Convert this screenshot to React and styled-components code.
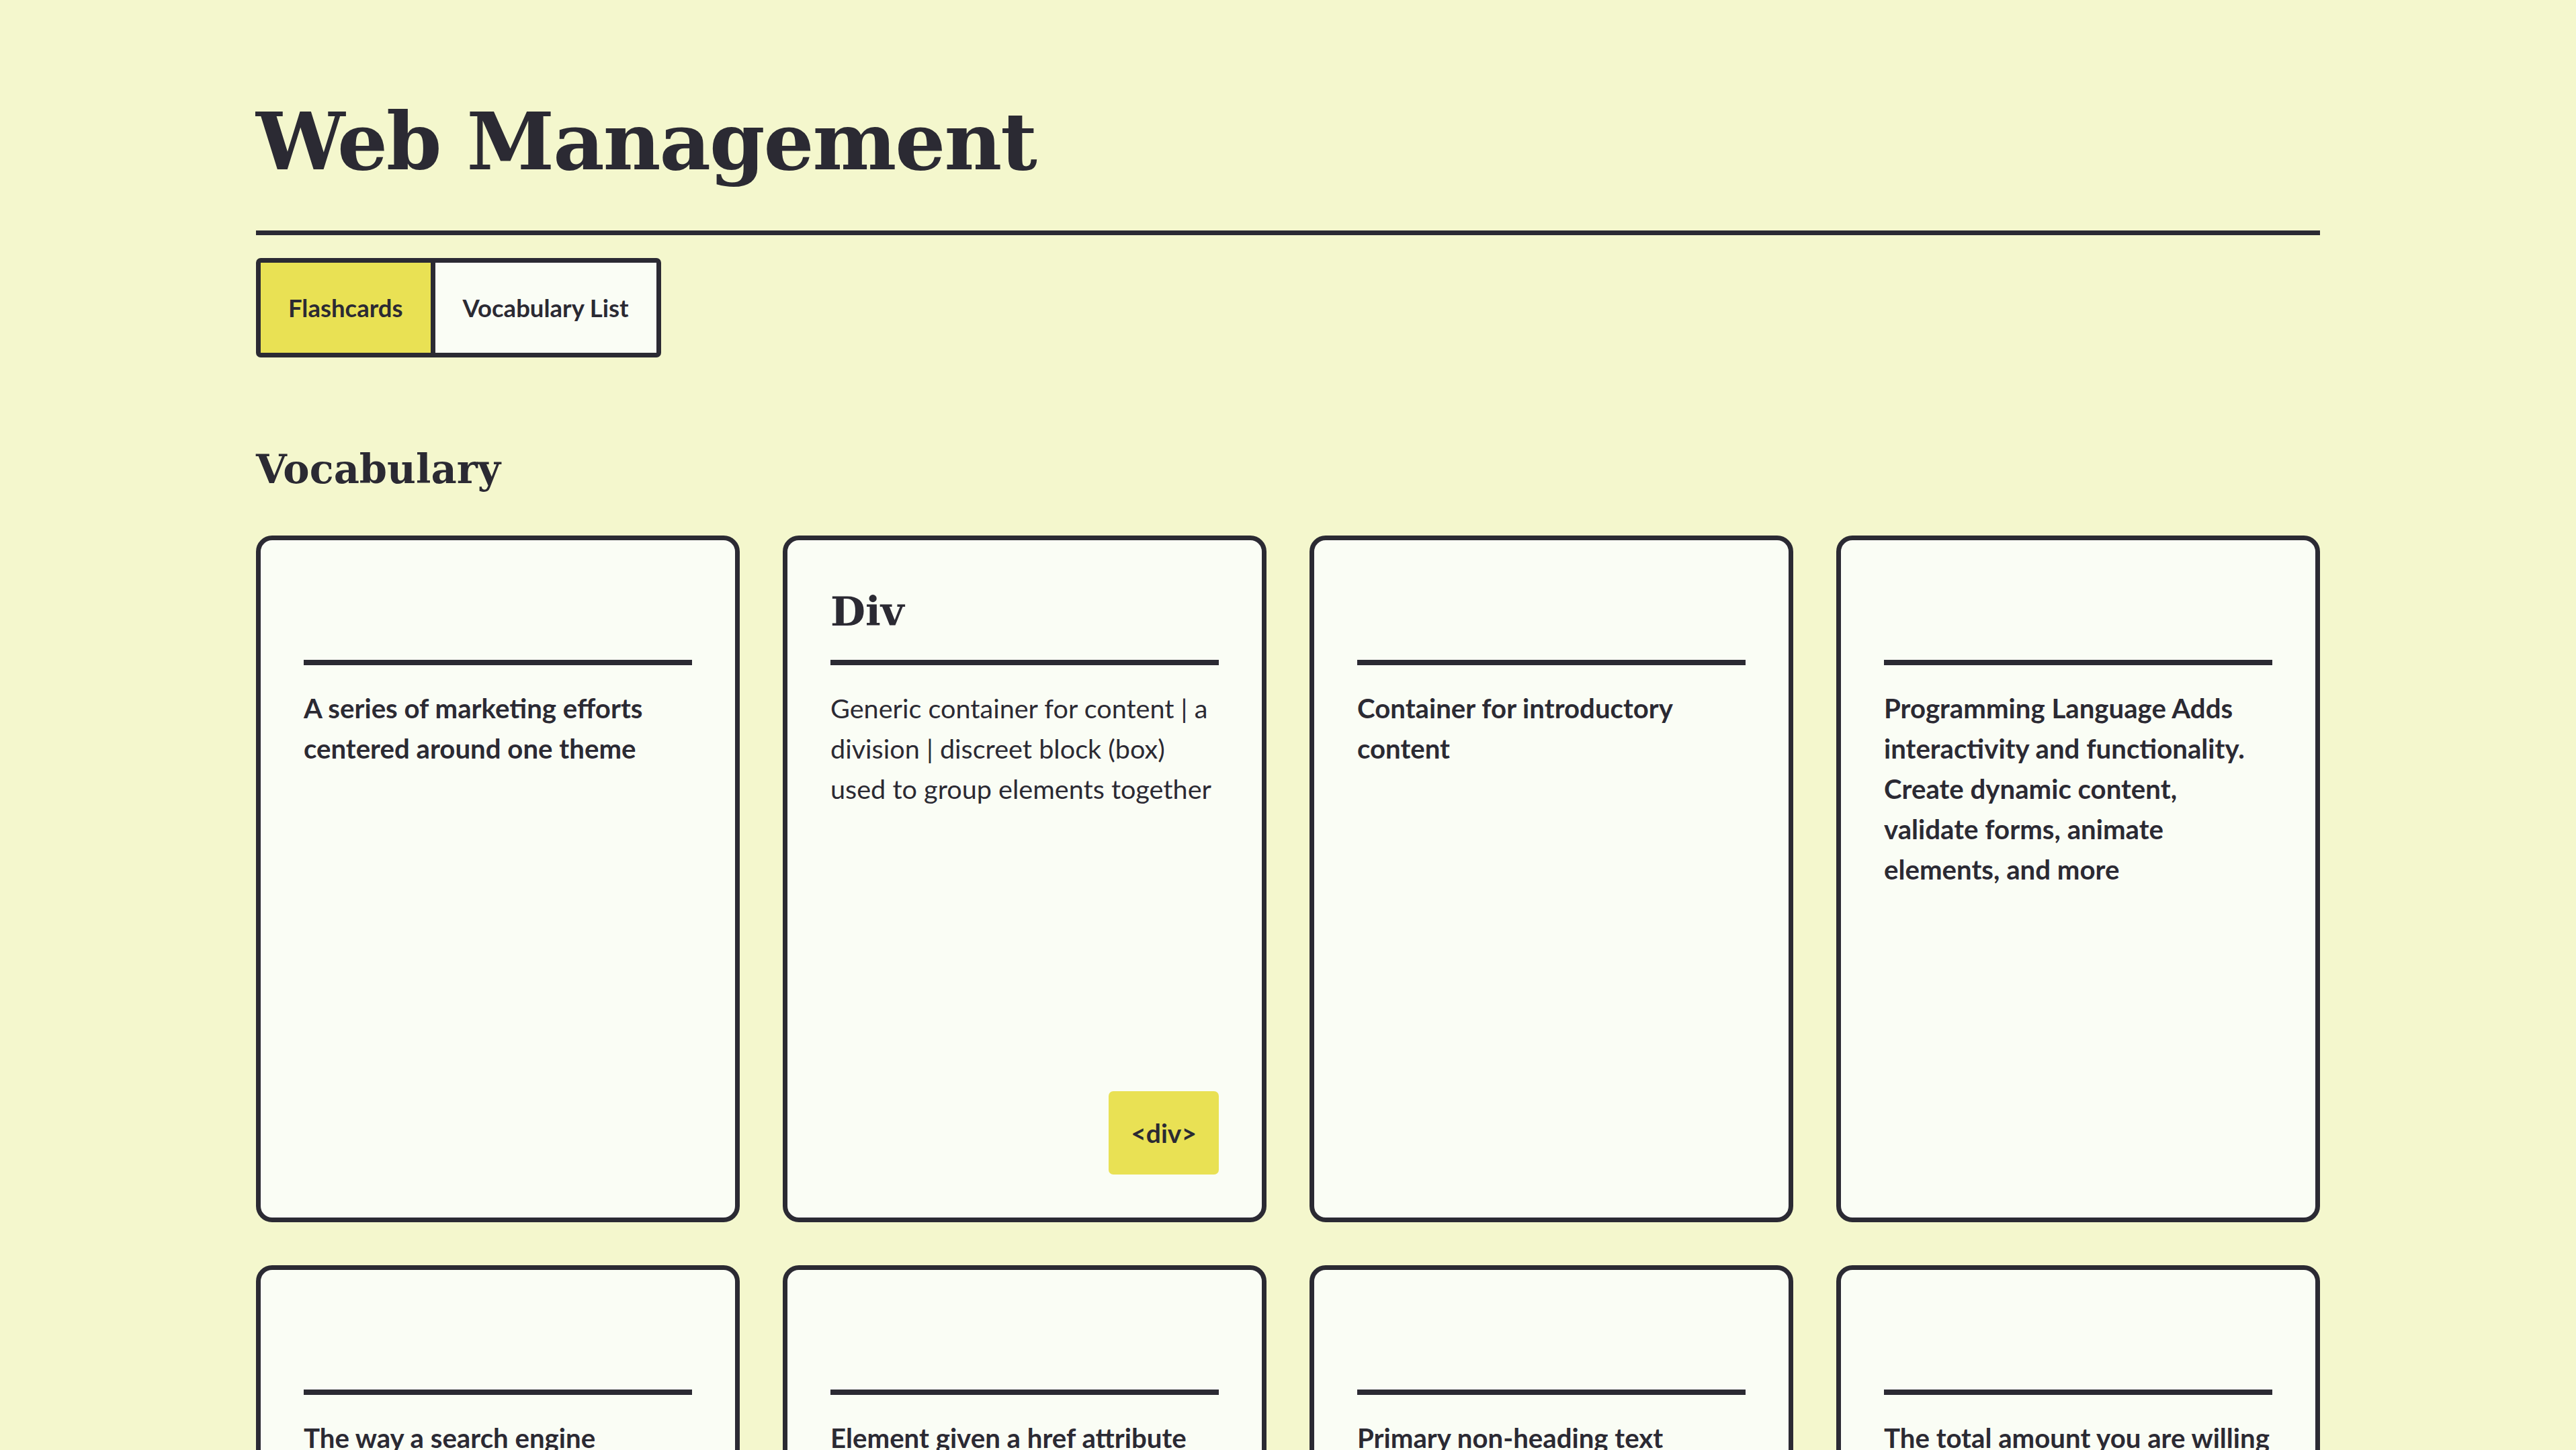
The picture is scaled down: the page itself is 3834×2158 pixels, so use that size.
import React from 'react';
import styled, { createGlobalStyle } from "styled-components";

const GlobalStyle = createGlobalStyle`
  html, body {
    margin: 0;
    padding: 0;
    background-color: #f4f7cd;
    color: #2b2a33;
    font-family: Lato, "Open Sans", sans-serif;
  }
`

const Page = styled.main`
  max-width: 3072px;
  margin: 0 auto;
  padding-top: 140px;
`

const Header = styled.header`
  border-bottom: 7px solid #2b2a33;
  padding-bottom: 61px;
`

const Title = styled.h1`
  margin: 0;
  font-family: "DejaVu Serif", "Liberation Serif", serif;
  font-weight: 700;
  font-size: 118px;
  line-height: 1.2;
  letter-spacing: -2px;
`

const Tabs = styled.div`
  display: inline-flex;
  margin-top: 34px;
  border: 7px solid #2b2a33;
  border-radius: 7px;
  overflow: hidden;
`

const Tab = styled.button`
  font-family: Lato, sans-serif;
  font-weight: 700;
  font-size: 36.5px;
  line-height: 44px;
  color: #2b2a33;
  padding: 45px 41px;
  border: none;
  border-left: ${props => props.first ? "none" : "7px solid #2b2a33"};
  background-color: ${props => props.active ? "#e9e154" : "#fafdf5"};
  cursor: pointer;
`

const SectionTitle = styled.h2`
  margin: 132px 0 0;
  font-family: "DejaVu Serif", "Liberation Serif", serif;
  font-weight: 700;
  font-size: 59px;
  line-height: 1.2;
`

const CardGrid = styled.div`
  display: grid;
  grid-template-columns: repeat(4, 1fr);
  gap: 64px;
  margin-top: 63px;
  padding-bottom: 64px;
`

const Card = styled.article`
  display: flex;
  flex-direction: column;
  box-sizing: border-box;
  height: 1022px;
  padding: 64px;
  border: 7px solid #2b2a33;
  border-radius: 24px;
  background-color: #fafdf5;
`

const Term = styled.h3`
  margin: 0;
  height: 84px;
  font-family: "DejaVu Serif", "Liberation Serif", serif;
  font-weight: 700;
  font-size: 60px;
  line-height: 84px;
`

const Rule = styled.div`
  height: 8px;
  margin-top: 30px;
  background-color: #2b2a33;
`

const Definition = styled.p`
  margin: 34px 0 0;
  font-family: Lato, sans-serif;
  font-weight: ${props => props.bold ? 700 : 400};
  font-size: ${props => props.bold ? "40.2px" : "39.6px"};
  line-height: 60px;
`

const Tag = styled.span`
  margin-top: auto;
  align-self: flex-end;
  padding: 32px 33px;
  border-radius: 7px;
  background-color: #e9e154;
  font-family: Lato, sans-serif;
  font-weight: 700;
  font-size: 39px;
  line-height: 60px;
`

const cards = [
  { definition: "A series of marketing efforts centered around one theme", bold: true },
  { term: "Div", definition: "Generic container for content | a division | discreet block (box) used to group elements together", tag: "<div>" },
  { definition: "Container for introductory content", bold: true },
  { definition: "Programming Language Adds interactivity and functionality. Create dynamic content, validate forms, animate elements, and more", bold: true },
  { definition: "The way a search engine determines where your website ranks", bold: true },
  { definition: "Element given a href attribute that links to another page", bold: true },
  { definition: "Primary non-heading text content of a page", bold: true },
  { definition: "The total amount you are willing to spend on a campaign", bold: true },
];

const App = () => {
  return (
    <>
      <GlobalStyle/>
      <Page>
        <Header>
          <Title>Web Management</Title>
        </Header>
        <Tabs>
          <Tab first active>Flashcards</Tab>
          <Tab>Vocabulary List</Tab>
        </Tabs>
        <SectionTitle>Vocabulary</SectionTitle>
        <CardGrid>
          {cards.map((card, i) => (
            <Card key={i}>
              <Term>{card.term}</Term>
              <Rule/>
              <Definition bold={card.bold}>{card.definition}</Definition>
              {card.tag && <Tag>{card.tag}</Tag>}
            </Card>
          ))}
        </CardGrid>
      </Page>
    </>
  );
};

export default App;
